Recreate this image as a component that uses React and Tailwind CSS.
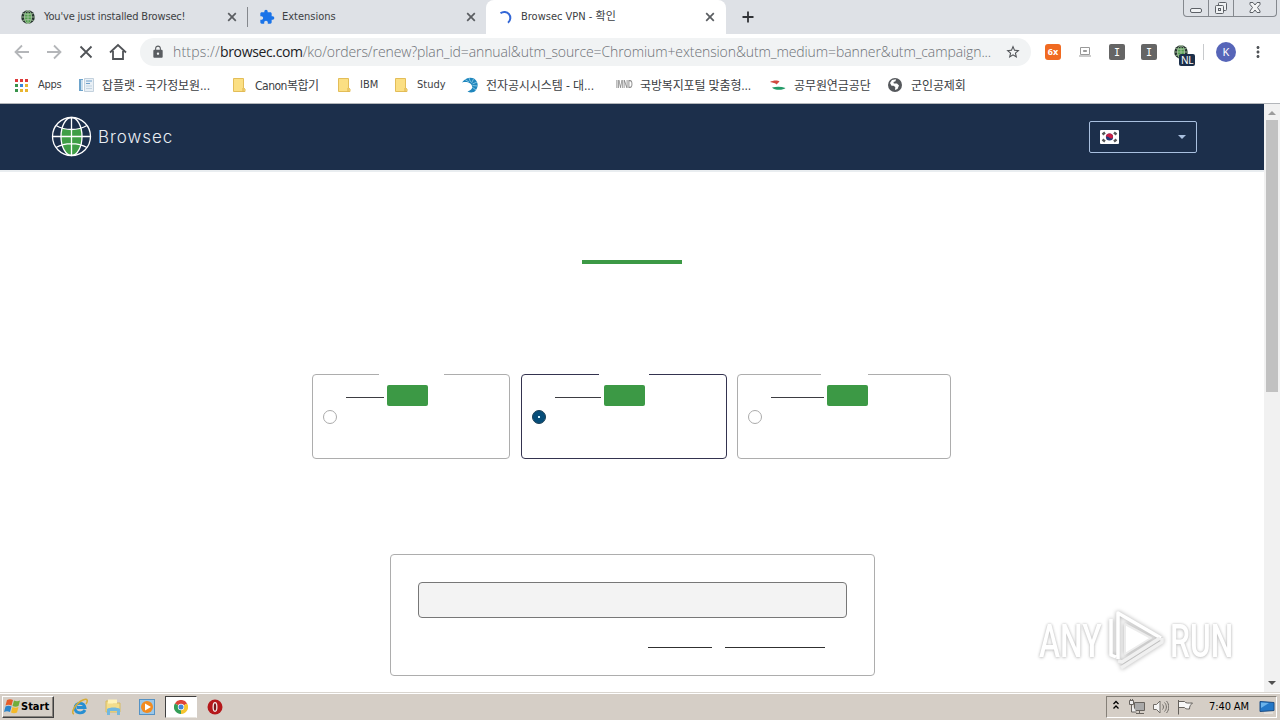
import React from 'react'
import { MdExtension, MdLock, MdStarBorder, MdMoreVert } from 'react-icons/md'

const BOOKMARKS = [
    { icon: 'apps', label: 'Apps', box: 'w-[64px]', text: 'text-[11px] tracking-[-0.3px]' },
    { icon: 'doc', label: '잡플랫 - 국가정보원...', box: 'w-[153px]', text: 'tracking-[-0.1px]' },
    { icon: 'folder', label: 'Canon복합기', box: 'w-[105px]', text: 'tracking-[-0.5px]' },
    { icon: 'folder', label: 'IBM', box: 'w-[57px]', text: 'text-[11px]' },
    { icon: 'folder', label: 'Study', box: 'w-[69px]', text: 'text-[11px]' },
    { icon: 'swirl', label: '전자공시시스템 - 대...', box: 'w-[154px]', text: 'tracking-[-0.1px]' },
    { icon: 'imnd', label: '국방복지포털 맞춤형...', box: 'w-[154px]', text: 'tracking-[-0.15px]' },
    { icon: 'wave', label: '공무원연금공단', box: 'w-[117px]', text: 'tracking-[-0.1px]' },
    { icon: 'globe', label: '군인공제회', box: 'w-[100px]', text: 'tracking-[-0.1px]' }
]

const PLANS = [
    { box: 'w-[198px] border-[#adadad]', legend: 'left-[66px] w-[65px]', price: 'w-[38px]', checked: false },
    { box: 'w-[206px] ml-[11px] border-[#34334f]', legend: 'left-[77px] w-[50px]', price: 'w-[46px]', checked: true },
    { box: 'w-[214px] ml-[10px] border-[#adadad]', legend: 'left-[83px] w-[47px]', price: 'w-[53px]', checked: false }
]

function SmallGlobe() {
    return (
        <svg width="16" height="16" viewBox="0 0 16 16" className="shrink-0">
            <circle cx="8" cy="8" r="6.8" fill="#26332f" />
            <path d="M5 4h6c1 3 1 6-.6 9.500-1.500 1-3.500 1-4.800 0C4 10 4 7 5 4z" fill="#50a04c" />
            <g fill="none" stroke="#a6c3a0" strokeWidth=".9">
                <ellipse cx="8" cy="8" rx="3.500" ry="6.500" />
                <path d="M8 1v14M1 8h14M2.500 4.500c3.500 1.200 7.500 1.200 11 0M2.500 11.500c3.500-1.200 7.500-1.200 11 0" />
            </g>
        </svg>
    )
}

function TabClose() {
    return (
        <svg width="14" height="14" viewBox="0 0 14 14" className="shrink-0">
            <path d="M3.200 3.200l7.600 7.600M10.800 3.200l-7.600 7.600" stroke="#5a5d61" strokeWidth="1.700" />
        </svg>
    )
}

function BookmarkIcon({ name }) {
    if (name === 'apps') {
        const colors = ['#dd3a3a', '#dd3a3a', '#dd3a3a', '#38934a', '#3886dd', '#e9b531', '#38934a', '#e9b531', '#e9b531']
        return (
            <div className="grid grid-cols-3 gap-[2px] w-[13px] ml-px">
                {colors.map((c, i) => <i key={i} className="h-[3px] w-[3px]" style={{ background: c }} />)}
            </div>
        )
    }
    if (name === 'folder') {
        return (
            <svg width="16" height="16" viewBox="0 0 16 16">
                <path d="M2.500 1.500h10v9.500l1.500 1v2.500H2.500z" fill="#fbdf83" stroke="#e3bd58" />
                <path d="M12 11v3.500" stroke="#dcb04c" />
            </svg>
        )
    }
    if (name === 'doc') {
        return (
            <svg width="16" height="16" viewBox="0 0 16 16">
                <path d="M1 2h4v12H1z" fill="#6da3cb" />
                <path d="M3 3h2v10H3z" fill="#c9deee" />
                <path d="M6.500 1.500h9v13h-9z" fill="#e9f0f6" stroke="#c3d1dd" />
                <path d="M8 4h6M8 6.500h4" stroke="#6fa0cb" />
                <path d="M8 9h6M8 11.500h6" stroke="#c2d3e1" />
            </svg>
        )
    }
    if (name === 'swirl') {
        return (
            <svg width="16" height="16" viewBox="0 0 16 16">
                <path d="M0 5.500C3 1 8-.5 12 1.500c4.500 3 4.500 8 2 11.500-2 3-6 3-8.500 1.500 4-1 5-3 4.500-5.500C9.500 6 5 4 0 5.500z" fill="#1f86bd" />
                <path d="M3 2.500l4 2.500M7 1l1.500 4M11.500 2L9.500 6M15 5l-4.500 2M15.500 9l-5-.5M14 13l-4-3" stroke="#a8dcf2" strokeWidth=".7" />
            </svg>
        )
    }
    if (name === 'imnd') {
        return <span className="text-[10px] font-bold text-[#8f8f8f] w-4 origin-left scale-x-[.65] font-['Liberation_Sans']">IMND</span>
    }
    if (name === 'wave') {
        return (
            <svg width="16" height="16" viewBox="0 0 16 16">
                <path d="M0 5C3 3 8 3 9.500 4.500L6.500 7.500C5.500 6 3 6 0 5z" fill="#d14a40" />
                <path d="M2 10.500c5-1 9-1 13.500.5-2 2.500-11.500 2.500-13.500-.5z" fill="#249b68" />
            </svg>
        )
    }
    return (
        <svg width="16" height="16" viewBox="0 0 16 16">
            <circle cx="8" cy="8" r="7" fill="#55585c" />
            <path d="M3 6l2-3 4-.8-.5 2L6.500 5l.3 1.500H10l2 2-1.500 3.500-2.500 1 .3-3-1.800-1.300H4.500z" fill="#fff" />
        </svg>
    )
}

function TabStrip() {
    return (
        <div className="flex h-[34px] bg-[#dee1e6] text-[11px] text-[#3c4043] font-['DejaVu_Sans','Noto_Sans_CJK_KR',sans-serif] font-stretch-condensed">
            <div className="flex items-center w-[248px] pl-5">
                <SmallGlobe />
                <span className="ml-2 pt-px w-[181px] whitespace-nowrap tracking-[-0.17px]">You've just installed Browsec!</span>
                <TabClose />
                <i className="w-px h-5 bg-[#85888d] ml-2" />
            </div>
            <div className="flex items-center w-[238px] pl-[11px] pr-2">
                <MdExtension className="w-4 h-4 text-[#1a73e8]" />
                <span className="ml-[7px] pt-px flex-1">Extensions</span>
                <TabClose />
            </div>
            <div className="flex items-center w-[240px] rounded-t-lg bg-white pl-[13px] pr-[9px]">
                <svg width="14" height="14" viewBox="0 0 14 14" fill="none">
                    <path d="M1.500 3.200A6 6 0 1 1 9 12.700" stroke="#3367d6" strokeWidth="2" />
                </svg>
                <span className="ml-2 pt-px flex-1">Browsec VPN - 확인</span>
                <TabClose />
            </div>
            <div className="flex items-center pl-4 flex-1">
                <svg width="12" height="12" viewBox="0 0 12 12"><path d="M6 .5v11M.5 6h11" stroke="#303236" strokeWidth="1.800" /></svg>
            </div>
            <div className="flex h-[17px] w-[94px] mr-[3px] border border-t-0 border-[#84888e] rounded-b-[4px]">
                <div className="w-[25px] border-r border-[#84888e] flex justify-center pt-2">
                    <i className="w-3 h-[5px] border border-[#5d6167] rounded-[2px] bg-[#f0f2f4]" />
                </div>
                <div className="w-[25px] border-r border-[#84888e] flex justify-center pt-px">
                    <svg width="14" height="14" viewBox="0 0 14 14" fill="#eff1f3" stroke="#5d6167">
                        <rect x="4.500" y="1.500" width="8" height="8" rx="1" />
                        <rect x="1.500" y="4.500" width="8" height="8" rx="1" />
                        <rect x="4.500" y="7.500" width="2" height="2" />
                    </svg>
                </div>
                <div className="flex-1 flex justify-center pt-[2px]">
                    <svg width="12" height="12" viewBox="0 0 12 12">
                        <path d="M1 .5h3l2 2.500 2-2.500h3v2L8.500 5.500 11 9v1.500H8L6 8l-2 2.500H1V9l2.500-3.500L1 2.500z" fill="#f3f4f5" stroke="#5d6167" />
                    </svg>
                </div>
            </div>
        </div>
    )
}

function Toolbar() {
    return (
        <div className="flex items-center h-9 bg-white">
            <svg width="128" height="20" viewBox="0 0 128 20" fill="none" strokeWidth="1.800" className="shrink-0">
                <path d="M29 10H15.500M22 3.500L15.500 10l6.500 6.500" stroke="#b4b6b9" />
                <path d="M47 10h13.500M54 3.500l6.500 6.500-6.500 6.500" stroke="#b4b6b9" />
                <path d="M80.500 4.500l11 11M91.500 4.500l-11 11" stroke="#505357" />
                <path d="M110 10.500L118 3l8 7.500M113 9v8h10V9" stroke="#505357" />
            </svg>
            <div className="ml-3 flex items-center h-7 w-[891px] rounded-full bg-[#f1f3f4] pl-[11px] pr-[10px]">
                <MdLock className="w-[14px] h-[14px] text-[#5a5d61]" />
                <span className="ml-2 flex-1 whitespace-nowrap text-sm font-light text-[#6d7176] tracking-[-0.1px] font-['Open_Sans']">
                    <span className="tracking-[0.2px]">https://</span><b className="font-normal text-[#202124] tracking-[-0.35px]">browsec.com</b>/ko/orders/renew?plan_id=annual&utm_source=Chromium+extension&utm_medium=banner&utm_campaign...
                </span>
                <MdStarBorder className="w-4 h-4 text-[#505357] shrink-0" />
            </div>
            <div className="ml-[14px] w-4 h-4 rounded-[3px] bg-[#f06a21] text-white text-[9px] font-bold flex items-center justify-center">6x</div>
            <svg width="12" height="10" viewBox="0 0 12 10" className="ml-[18px]" fill="none" stroke="#999">
                <path d="M1.500 .5h9v7h-9zM0 9h12" />
                <path d="M4.500 3.500h3v1h-3z" fill="#888" />
            </svg>
            <div className="ml-[18px] w-4 h-4 rounded-[2px] bg-[#656565] text-white text-[10px] flex items-center justify-center font-['DejaVu_Sans_Mono']">I</div>
            <div className="ml-4 w-4 h-4 rounded-[2px] bg-[#656565] text-white text-[10px] flex items-center justify-center font-['DejaVu_Sans_Mono']">I</div>
            <div className="relative ml-4">
                <SmallGlobe />
                <span className="absolute left-[6px] top-[10px] h-3 w-4 rounded-[2px] bg-[#1c2f4a] text-white text-[10px] leading-3 text-center tracking-[-0.5px]">NL</span>
            </div>
            <i className="ml-[14px] w-px h-4 bg-[#c8cacd]" />
            <div className="ml-3 w-5 h-5 rounded-full bg-[#5665b8] text-white text-[11px] flex items-center justify-center">K</div>
            <MdMoreVert className="ml-[13px] w-[18px] h-[18px] text-[#505357]" />
        </div>
    )
}

function Bookmarks() {
    return (
        <div className="flex items-center h-[33px] pl-[14px] pb-[3px] bg-white text-xs text-[#3c4043] font-['DejaVu_Sans','Noto_Sans_CJK_KR',sans-serif] font-stretch-condensed">
            {BOOKMARKS.map((b) => (
                <div key={b.label} className={`flex items-center gap-2 shrink-0 ${b.box}`}>
                    <div className="w-4 flex items-center shrink-0"><BookmarkIcon name={b.icon} /></div>
                    <span className={`whitespace-nowrap pt-px ${b.text}`}>{b.label}</span>
                </div>
            ))}
        </div>
    )
}

function SiteHeader() {
    return (
        <header className="flex items-center h-[68px] bg-[#1c2f4b] border-b-2 border-[#e9edf0] pl-[51px] pr-[67px]">
            <svg width="41" height="41" viewBox="0 0 41 41" fill="none" stroke="#fff" strokeWidth="1.300" className="mb-px">
                <path d="M11 12c6 2 13 2 19 0 2 9 1 20-5 26-3 2-6 2-9 0-6-6-7-17-5-26z" fill="#3f9e45" stroke="none" />
                <circle cx="20.500" cy="20.500" r="19" />
                <ellipse cx="20.500" cy="20.500" rx="10.500" ry="19" />
                <path d="M20.500 1.500v38M1.500 20.500h38M5 9.500c9 5.300 22 5.300 31 0M5 31.500c9-5.300 22-5.300 31 0" />
            </svg>
            <span className="ml-[6px] flex-1 pt-px text-[#e8edf3] text-[17px] font-light tracking-[0.95px] font-[Inter]">Browsec</span>
            <div className="flex items-center justify-between w-[108px] h-8 border border-[#a9c0df] rounded-[2px] pl-[10px] pr-[10px]">
                <svg width="19" height="14" viewBox="0 0 19 14">
                    <rect width="19" height="14" rx="1" fill="#fff" />
                    <circle cx="9.500" cy="7" r="3.600" fill="#223a78" />
                    <path d="M5.900 7a3.600 3.600 0 0 1 7.200 0c-1 2-2.700 1.800-3.600.8S7 6 5.900 7z" fill="#c91f45" />
                    <path d="M2.500 4.500l2.500-2M14 2.500l2.500 2M2.500 9.500l2.500 2M14 11.500l2.500-2" stroke="#555" strokeWidth="2.400" />
                </svg>
                <svg width="8" height="4" viewBox="0 0 8 4"><path d="M0 0h8L4 4z" fill="#a9c0df" /></svg>
            </div>
        </header>
    )
}

function Plan({ plan }) {
    return (
        <div className={`relative h-[85px] border rounded-[4px] px-[10px] pt-[10px] ${plan.box}`}>
            <span className={`absolute -top-px h-px bg-white ${plan.legend}`} />
            <div className="flex items-start pl-[23px]">
                <i className={`mt-3 h-px bg-[#3d3d42] ${plan.price}`} />
                <i className="ml-[3px] w-[41px] h-[21px] rounded-[2px] bg-[#3c9945]" />
            </div>
            {plan.checked ? (
                <div className="mt-1 w-[14px] h-[14px] rounded-full bg-[#064d79] border border-[#1d4057] flex items-center justify-center">
                    <i className="w-[2px] h-[2px] bg-[#d2f3ff]" />
                </div>
            ) : (
                <div className="mt-1 w-[14px] h-[14px] rounded-full border border-[#ababab]" />
            )}
        </div>
    )
}

function Watermark() {
    return (
        <div className="absolute left-[1039px] top-[505px] flex items-center h-[64px] w-[200px] text-white font-['Roboto'] font-medium text-[46px] leading-[64px] [text-shadow:0_0_3px_#bdbdbd,0_1px_4px_#d0d0d0]">
            <span className="w-[68px] origin-left scale-x-[.69]">ANY</span>
            <svg width="60" height="64" viewBox="0 0 60 64" fill="none" strokeLinejoin="round" className="shrink-0 drop-shadow-[0_0_2px_#aaa]">
                <path d="M4 10v36l5 2M11 50V4l43 25" stroke="#fff" strokeWidth="3.500" />
                <path d="M14 59l41-26V29M11 52l4 1 38-24" stroke="#f0f0f0" strokeWidth="3.500" />
                <path d="M18 15v30l26-16z" fill="#fff" stroke="#ececec" strokeWidth="2" />
            </svg>
            <span className="ml-[3px] origin-left scale-x-[.69]">RUN</span>
        </div>
    )
}

function Scrollbar() {
    return (
        <div className="flex flex-col items-center w-4 bg-[#f1f1f1]">
            <svg width="16" height="16" viewBox="0 0 16 16"><path d="M4 11l4-4 4 4z" fill="#9c9c9c" /></svg>
            <div className="w-3 h-[272px] bg-[#c1c1c1]" />
            <svg width="16" height="16" viewBox="0 0 16 16" className="mt-auto mb-[1px]"><path d="M4 6h8l-4 4z" fill="#505050" /></svg>
        </div>
    )
}

function Page() {
    return (
        <div className="relative flex h-[588px] bg-white">
            <main className="w-[1264px]">
                <SiteHeader />
                <div className="mx-auto mt-[88px] w-[100px] h-1 bg-[#3c9945]" />
                <div className="flex ml-[312px] mt-[110px]">
                    {PLANS.map((p, i) => <Plan key={i} plan={p} />)}
                </div>
                <div className="ml-[390px] mt-[95px] w-[485px] h-[122px] border border-[#adadad] rounded-[4px] px-[27px] pt-[27px]">
                    <div className="h-9 border border-[#777] rounded-[4px] bg-[#f3f3f3]" />
                    <div className="mt-[29px] flex gap-[13px] justify-end pr-[22px]">
                        <i className="w-[64px] h-px bg-[#303030]" />
                        <i className="w-[100px] h-px bg-[#303030]" />
                    </div>
                </div>
            </main>
            <Scrollbar />
            <Watermark />
        </div>
    )
}

function Taskbar() {
    return (
        <div className="flex items-center h-7 bg-[#d5cec6] border-t border-[#d9d5cf] shadow-[inset_0_1px_0_#fff] pt-[2px] pl-[2px] pr-[3px] pb-[2px]">
            <div className="flex items-center w-[52px] h-[22px] border border-t-white border-l-white border-r-[#404040] border-b-[#404040] shadow-[inset_-1px_-1px_0_#87827c] pl-[1px] text-[11px] font-bold text-black font-['DejaVu_Sans'] font-stretch-condensed">
                <svg width="17" height="17" viewBox="0 0 17 17" className="shrink-0">
                    <path d="M3 2c2-1 4-1 6 0L7.500 7.500c-2-1-4-1-6 0z" fill="#e55c28" />
                    <path d="M10 2.500c2 1 4 1 6 0L14.500 8c-2 1-4 1-6 0z" fill="#71ad3b" />
                    <path d="M1.500 8.500c2-1 4-1 6 0L6 14c-2-1-4-1-6 0z" fill="#2b84ca" />
                    <path d="M8.500 9c2 1 4 1 6 0L13 14.500c-2 1-4 1-6 0z" fill="#f4b929" />
                </svg>
                <span className="pt-[2px]">Start</span>
            </div>
            <svg width="18" height="18" viewBox="0 0 18 18" className="ml-[17px]" fill="none">
                <path d="M14 12c-2 4-10 4-10-2s9-6 10-.5H6" stroke="#278fd2" strokeWidth="2.800" />
                <path d="M3 16C-1 15 5 5 12 2c5-2 5 1 3 4" stroke="#d6ac35" strokeWidth="1.500" />
            </svg>
            <svg width="18" height="18" viewBox="0 0 18 18" className="ml-[15px]">
                <path d="M2 3h6l1 2h7v9H2z" fill="#f3dd8b" stroke="#d8bb61" />
                <path d="M4 1.500h9v4H4z" fill="#fff3b9" />
                <path d="M3 11c3-2 10-2 13 0v6h-3v-4H6v4H3z" fill="#72b8df" />
            </svg>
            <svg width="18" height="18" viewBox="0 0 18 18" className="ml-4">
                <rect x="1.500" y="1.500" width="15" height="15" fill="#9bc7e8" stroke="#5592c4" />
                <circle cx="9" cy="9" r="6" fill="#f28b20" />
                <path d="M7 5.500v7l6-3.500z" fill="#fff" />
            </svg>
            <div className="ml-[9px] w-8 h-[22px] bg-white border border-t-[#404040] border-l-[#404040] border-r-white border-b-[#e8e4de] flex items-center justify-center">
                <svg width="14" height="14" viewBox="0 0 14 14">
                    <path d="M7 7L.9 3.500A7 7 0 0 1 13.100 3.500z" fill="#dd4438" />
                    <path d="M7 7L13.100 3.500A7 7 0 0 1 7 14z" fill="#f6c52e" />
                    <path d="M7 7v7A7 7 0 0 1 .9 3.500z" fill="#349e57" />
                    <circle cx="7" cy="7" r="3.200" fill="#fff" />
                    <circle cx="7" cy="7" r="2.500" fill="#4285d8" />
                </svg>
            </div>
            <svg width="16" height="16" viewBox="0 0 16 16" className="ml-[10px]">
                <circle cx="8" cy="8" r="7.500" fill="#b5181b" />
                <ellipse cx="8" cy="8" rx="2.500" ry="4.900" fill="#f2e9e7" />
                <ellipse cx="8" cy="8" rx="1.200" ry="3.800" fill="#77191b" />
            </svg>
            <div className="ml-auto flex items-center h-[22px] w-[171px] border border-t-[#858078] border-l-[#858078] border-b-white border-r-white pl-[5px] pr-px text-[11px] text-black font-['DejaVu_Sans'] font-stretch-condensed">
                <svg width="8" height="10" viewBox="0 0 8 10" fill="none" stroke="#000" strokeWidth="1.300" className="mb-1"><path d="M1.500 4L4 1.500 6.500 4M1.500 8.500L4 6l2.500 2.500" /></svg>
                <svg width="16" height="16" viewBox="0 0 16 16" className="ml-[9px]" fill="#eee" stroke="#67635e">
                    <path d="M5.500 3.500h10v8h-10z" fill="#a9a9a9" />
                    <path d="M7 14.500h8M10.500 12v2M2.500 5v8h5" />
                    <path d="M.5 1.500h4v4h-4zM1.500 0v2M3.500 0v2" />
                </svg>
                <svg width="16" height="16" viewBox="0 0 16 16" className="ml-[8px]" fill="none" stroke="#706c67">
                    <path d="M.5 5.500h3L7 2v12l-3.500-3.500h-3z" fill="#f5f5f5" />
                    <path d="M9.500 5.500c1.300 1.500 1.300 3.500 0 5M11.500 3.500c2.500 2.500 2.500 6.500 0 9M13.500 2c3 3.500 3 8.500 0 12" />
                </svg>
                <svg width="16" height="16" viewBox="0 0 16 16" className="ml-[8px]" fill="#f7f7f7" stroke="#65615c">
                    <path d="M1.500 1v14.500M1.500 2.500h6c1 2 4 1.500 8 1.500-2 2-3 3-3 6-3 0-4 0-5-1.500h-6" />
                </svg>
                <span className="ml-4 pt-[2px] flex-1 whitespace-nowrap tracking-[-0.1px]">7:40 AM</span>
                <svg width="16" height="16" viewBox="0 0 16 16">
                    <path d="M1 2.500l14 1v8l-14 1z" fill="#2478c8" stroke="#1c4e86" />
                    <path d="M2 3.500l8 .5-8 5z" fill="#6bb3eb" />
                    <path d="M5 14h9" stroke="#eee" />
                </svg>
            </div>
        </div>
    )
}

export default function App() {
    return (
        <div className="w-[1280px] h-[720px] overflow-hidden bg-white font-['Noto_Sans','Noto_Sans_CJK_KR',sans-serif]">
            <TabStrip />
            <Toolbar />
            <Bookmarks />
            <div className="h-px bg-[#b3b6ba]" />
            <Page />
            <Taskbar />
        </div>
    )
}
